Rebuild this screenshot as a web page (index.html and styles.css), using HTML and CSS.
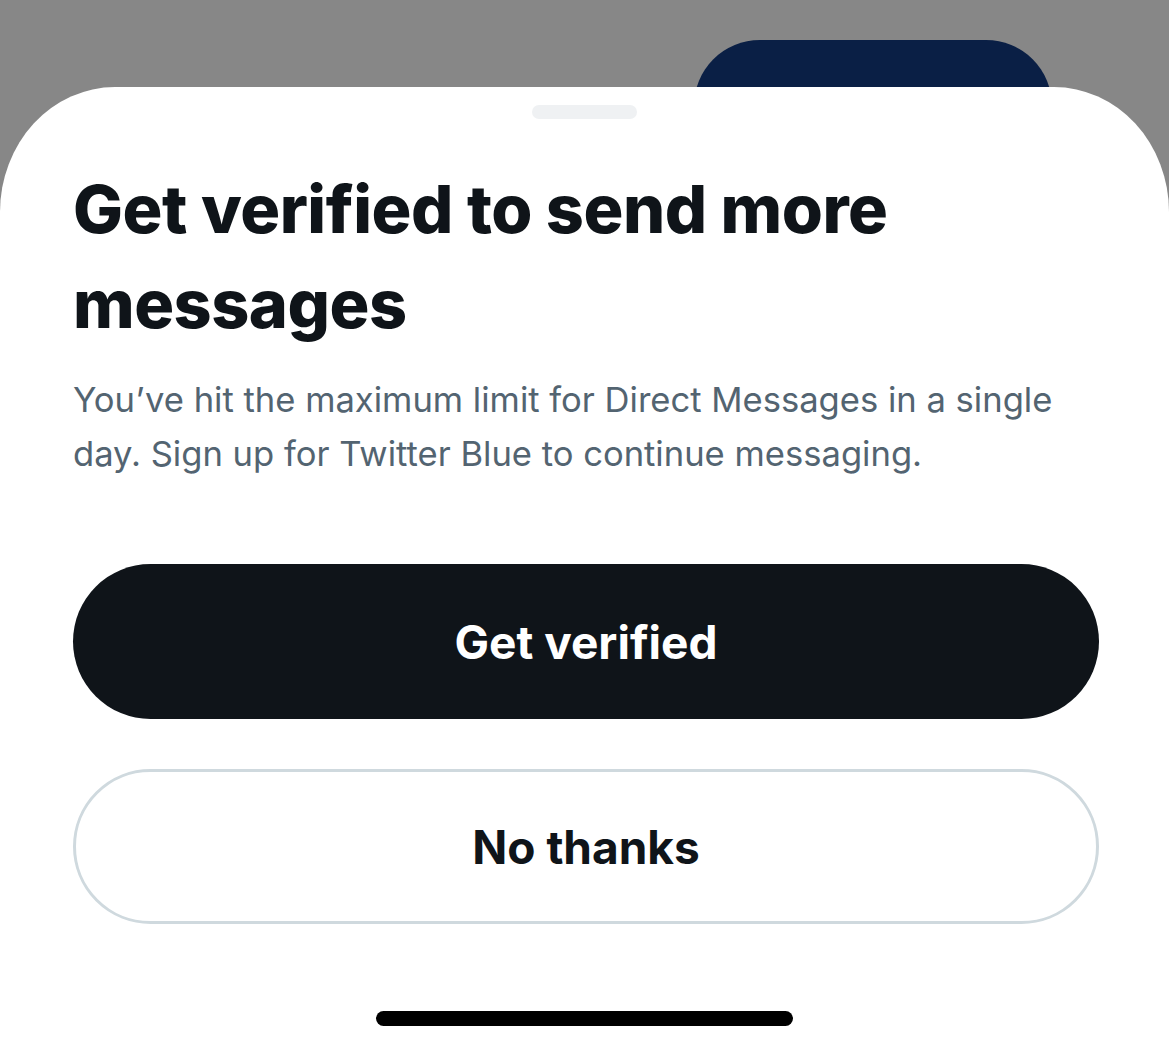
FILE: index.html
```html
<!DOCTYPE html>
<html lang="en">
<head>
<meta charset="utf-8">
<title>Get verified</title>
<link rel="stylesheet" href="styles.css">
</head>
<body>
<div class="backdrop">
  <div class="behind-pill"></div>
  <section class="sheet">
    <div class="grabber"></div>
    <h1 class="title">Get verified to send more messages</h1>
    <p class="desc">You’ve hit the maximum limit for Direct Messages in a single day. Sign up for Twitter Blue to continue messaging.</p>
    <div class="actions">
      <button class="btn btn-primary">Get verified</button>
      <button class="btn btn-secondary">No thanks</button>
    </div>
    <div class="home-indicator"></div>
  </section>
</div>
</body>
</html>
```

FILE: styles.css
```css
* { box-sizing: border-box; }
html, body { margin: 0; padding: 0; }
body {
  width: 1169px;
  height: 1049px;
  overflow: hidden;
  background: #878787;
  font-family: Inter, "Noto Sans", sans-serif;
}
.backdrop {
  position: relative;
  width: 1169px;
  height: 1049px;
  padding-top: 87px;
}
.behind-pill {
  position: absolute;
  left: 694px;
  top: 40px;
  width: 358px;
  height: 160px;
  border-radius: 66px;
  background: #0a1f45;
}
.sheet {
  position: relative;
  height: 962px;
  background: #ffffff;
  border-radius: 115px 115px 0 0 / 125px 125px 0 0;
  padding: 18px 71px 0 73px;
  display: flex;
  flex-direction: column;
}
.grabber {
  align-self: center;
  width: 105px;
  height: 14px;
  border-radius: 7px;
  background: #eff1f3;
  margin-left: -2px;
}
.title {
  margin: 43px 0 0;
  font-size: 66.5px;
  line-height: 95px;
  font-weight: 800;
  color: #0f1419;
  letter-spacing: -0.5px;
}
.desc {
  margin: 20px 0 0;
  font-size: 34.6px;
  line-height: 54px;
  color: #536471;
  font-weight: 400;
}
.actions {
  margin-top: 84px;
  display: flex;
  flex-direction: column;
  gap: 50px;
}
.btn {
  width: 1026px;
  height: 155px;
  border-radius: 78px;
  font-family: Inter, "Noto Sans", sans-serif;
  font-size: 46px;
  font-weight: 700;
  cursor: pointer;
}
.btn-primary {
  background: #0f1419;
  color: #ffffff;
  border: none;
}
.btn-secondary {
  background: #ffffff;
  color: #0f1419;
  border: 3px solid #cfd9de;
}
.home-indicator {
  align-self: center;
  margin-top: auto;
  margin-bottom: 23px;
  width: 417px;
  height: 15px;
  border-radius: 8px;
  background: #000000;
  margin-left: -3px;
}
```
